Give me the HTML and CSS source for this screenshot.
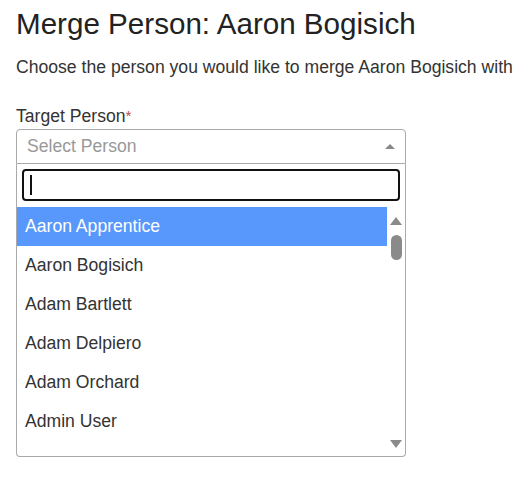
FILE: index.html
```html
<!DOCTYPE html>
<html lang="en">
<head>
  <meta charset="UTF-8" />
  <title>Merge Person</title>
  <link rel="stylesheet" href="styles.css">
</head>
<body>

<div class="page">
  <h1>Merge Person: Aaron Bogisich</h1>
  <p class="intro">Choose the person you would like to merge Aaron Bogisich with</p>

  <label class="field-label">Target Person<span class="req">*</span></label>

  <div class="picker">
    <div class="picker-choice">
      <span class="placeholder">Select Person</span>
      <span class="arrow-up"></span>
    </div>

    <div class="picker-drop">
      <div class="search-wrap">
        <div class="search"><span class="caret"></span></div>
      </div>

      <div class="results">
        <ul class="options">
          <li class="active">Aaron Apprentice</li>
          <li>Aaron Bogisich</li>
          <li>Adam Bartlett</li>
          <li>Adam Delpiero</li>
          <li>Adam Orchard</li>
          <li>Admin User</li>
        </ul>
        <div class="scrollbar">
          <span class="sb-up"></span>
          <span class="sb-thumb"></span>
          <span class="sb-space"></span>
          <span class="sb-down"></span>
        </div>
      </div>
    </div>
  </div>
</div>

</body>
</html>
```

FILE: styles.css
```css
* { box-sizing: border-box; }

body {
  margin: 0;
  font-family: 'Liberation Sans', Arial, sans-serif;
  color: #333;
  background: #fff;
}

.page {
  padding: 8px 16px 0 16px;
}

h1 {
  margin: 0;
  font-size: 29.6px;
  font-weight: 400;
  line-height: 32px;
  color: #222;
}

.intro {
  margin: 15px 0 0 0;
  font-size: 17.6px;
  line-height: 24px;
  white-space: nowrap;
}

.field-label {
  display: block;
  margin-top: 26px;
  font-size: 17.6px;
  line-height: 22px;
}

.req {
  color: #b94a48;
  font-size: 15px;
  vertical-align: top;
}

.picker {
  width: 390px;
  margin-top: 2px;
}

.picker-choice {
  display: flex;
  align-items: center;
  justify-content: space-between;
  height: 35px;
  padding: 0 10px 0 10px;
  border: 1px solid #aaa;
  border-radius: 4px 4px 0 0;
  font-size: 17.6px;
}

.placeholder { color: #999; }

.arrow-up {
  width: 0;
  height: 0;
  border-left: 5px solid transparent;
  border-right: 5px solid transparent;
  border-bottom: 5px solid #888;
}

.picker-drop {
  border: 1px solid #aaa;
  border-top: none;
  border-radius: 0 0 4px 4px;
}

.search-wrap {
  padding: 5px 5px 6px 5px;
}

.search {
  display: flex;
  align-items: center;
  height: 32px;
  padding-left: 6px;
  border: 2px solid #111;
  border-radius: 4px;
}

.caret {
  width: 2px;
  height: 20px;
  background: #111;
}

.results {
  display: flex;
  height: 249px;
  overflow: hidden;
}

.options {
  flex: 1;
  margin: 0;
  padding: 0;
  list-style: none;
  font-size: 17.6px;
}

.options li {
  height: 39px;
  line-height: 39px;
  padding-left: 8px;
}

.options li.active {
  background: #5897fb;
  color: #fff;
}

.scrollbar {
  width: 18px;
  display: flex;
  flex-direction: column;
  align-items: center;
  padding: 10px 0 8px 0;
}

.sb-up, .sb-down {
  width: 0;
  height: 0;
  border-left: 6px solid transparent;
  border-right: 6px solid transparent;
}

.sb-up { border-bottom: 8px solid #8a8a8a; }
.sb-down { border-top: 8px solid #8a8a8a; }

.sb-thumb {
  width: 11px;
  height: 25px;
  margin-top: 10px;
  border-radius: 6px;
  background: #8a8a8a;
}

.sb-space { flex: 1; }
```
